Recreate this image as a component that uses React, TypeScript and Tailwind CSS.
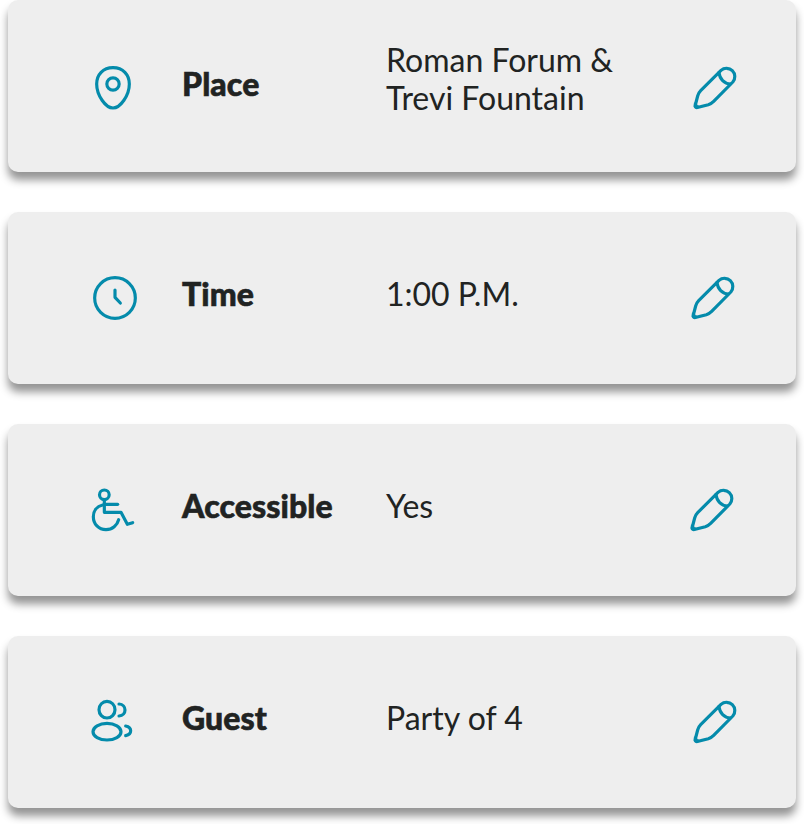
import type { ReactNode } from "react";

const stroke = {
  fill: "none",
  stroke: "currentColor",
  strokeWidth: 9.5,
  strokeLinecap: "round",
  strokeLinejoin: "round",
} as const;

function Icon({ children, className }: { children: ReactNode; className: string }) {
  return (
    <svg viewBox="0 0 210 195" className={`h-[65px] w-[70px] shrink-0 text-[#048bab] ${className}`} {...stroke}>
      {children}
    </svg>
  );
}

function Pencil({ className }: { className: string }) {
  return (
    <Icon className={className}>
      <path d="M123 46 A25 25 0 0 1 158.500 81 L101 139 C96 144 91 147 85 149 L55 157 C48 159 44 157 46 150 L53 123 C55 116 57 112 62 107 Z" />
      <path d="M117 53 C119 72 133 86 151 87" />
      <path d="M44 144 L61 157 L49 160 L43 156 Z" fill="currentColor" strokeWidth={2} />
    </Icon>
  );
}

const pin = (
  <>
    <path d="M99 38 C129 38 148 59 148 87 C148 121 121 159 99 159 C77 159 50 121 50 87 C50 59 69 38 99 38 Z" />
    <circle cx="99" cy="87" r="18.5" />
  </>
);

const clock = (
  <>
    <circle cx="105" cy="99" r="61" />
    <path d="M105 75 V97 L121 114" />
  </>
);

const wheelchair = (
  <>
    <circle cx="73" cy="50.500" r="14.500" />
    <path d="M73 66 V103 H123 L142 139 L158 134" />
    <path d="M73 79 H113" />
    <path d="M68 81 C50 85 40 99 40 116 C40 138 56 155 78 155 C97 155 112 142 116 125" />
  </>
);

const people = (
  <>
    <ellipse cx="81" cy="59" rx="24" ry="25" />
    <path d="M117 42 C141 43 141 77 117 78" />
    <ellipse cx="81" cy="125" rx="42" ry="25" />
    <path d="M137 108 C157 112 157 133 137 137" />
  </>
);

const rows = [
  { label: "Place", value: ["Roman Forum &", "Trevi Fountain"], icon: pin, iconTop: "mt-[55px]", labelTop: "mt-[65px]", valueTop: "mt-[41px]", pencil: "mt-[55px] ml-[12px]" },
  { label: "Time", value: ["1:00 P.M."], icon: clock, iconTop: "mt-[53px]", labelTop: "mt-[63px]", valueTop: "mt-[63px]", pencil: "mt-[53px] ml-[10px]" },
  { label: "Accessible", value: ["Yes"], icon: wheelchair, iconTop: "mt-[54px]", labelTop: "mt-[63px]", valueTop: "mt-[63px]", pencil: "mt-[53px] ml-[9px]" },
  { label: "Guest", value: ["Party of 4"], icon: people, iconTop: "mt-[54px]", labelTop: "mt-[63px]", valueTop: "mt-[63px]", pencil: "mt-[53px] ml-[12px]" },
];

export default function App() {
  return (
    <main className="flex h-[824px] w-[804px] flex-col gap-10 overflow-hidden bg-white px-2 font-['Lato',sans-serif] text-[32px] leading-[38px] text-[#212322]">
      {rows.map((row) => (
        <section
          key={row.label}
          className="flex h-[172px] shrink-0 items-start rounded-[10px] bg-[#eeeeee] pl-[72px] shadow-[0_8px_8px_rgba(0,0,0,0.42)]"
        >
          <Icon className={row.iconTop}>{row.icon}</Icon>
          <h2 className={`ml-[32px] w-[204px] shrink-0 font-black tracking-[0.1px] [-webkit-text-stroke:0.6px_#212322] ${row.labelTop}`}>{row.label}</h2>
          <p className={`w-[282px] shrink-0 ${row.valueTop}`}>
            {row.value.map((line) => (
              <span key={line} className="block whitespace-nowrap">{line}</span>
            ))}
          </p>
          <Pencil className={row.pencil} />
        </section>
      ))}
    </main>
  );
}
